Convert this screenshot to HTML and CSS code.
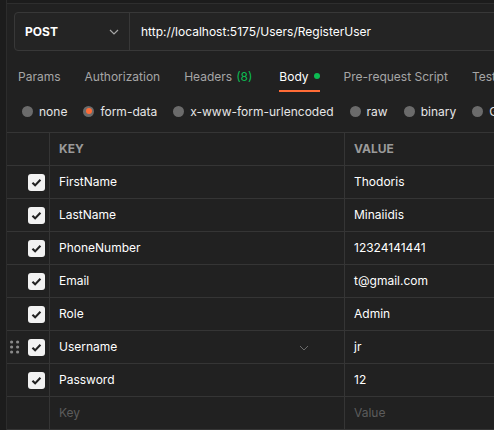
FILE: index.html
```html
<!DOCTYPE html>
<html>
<head>
<meta charset="utf-8">
<link rel="stylesheet" href="styles.css">
</head>
<body>
<div class="app">
  <div class="side"></div>
  <div class="main">
    <div class="topstrip"></div>
    <div class="reqbar">
      <div class="method">
        <span class="method-name">POST</span>
        <svg class="chev" width="10" height="6" viewBox="0 0 10 6"><path d="M1 1l4 4 4-4" fill="none" stroke="#a6a6a6" stroke-width="1.2"/></svg>
      </div>
      <div class="url">http://localhost:5175/Users/RegisterUser</div>
    </div>
    <div class="tabs">
      <span class="tab">Params</span>
      <span class="tab">Authorization</span>
      <span class="tab headers">Headers <span class="count">(8)</span></span>
      <span class="tab active">Body <span class="dot"></span></span>
      <span class="tab">Pre-request Script</span>
      <span class="tab">Tests</span>
    </div>
    <div class="radios">
      <span class="radio"><span class="circle"></span>none</span>
      <span class="radio"><span class="circle on"></span>form-data</span>
      <span class="radio"><span class="circle"></span>x-www-form-urlencoded</span>
      <span class="radio"><span class="circle"></span>raw</span>
      <span class="radio"><span class="circle"></span>binary</span>
      <span class="radio"><span class="circle"></span>GraphQL</span>
    </div>
    <div class="table">
      <div class="row head">
        <div class="c1"></div>
        <div class="c2">KEY</div>
        <div class="c3">VALUE</div>
      </div>
      <div class="row">
        <div class="c1"><span class="cb"><svg viewBox="0 0 16 16"><path d="M4.2 8.3l2.5 2.4 5-5.2" fill="none" stroke="#212121" stroke-width="2"/></svg></span></div>
        <div class="c2">FirstName</div>
        <div class="c3">Thodoris</div>
      </div>
      <div class="row">
        <div class="c1"><span class="cb"><svg viewBox="0 0 16 16"><path d="M4.2 8.3l2.5 2.4 5-5.2" fill="none" stroke="#212121" stroke-width="2"/></svg></span></div>
        <div class="c2">LastName</div>
        <div class="c3">Minaiidis</div>
      </div>
      <div class="row">
        <div class="c1"><span class="cb"><svg viewBox="0 0 16 16"><path d="M4.2 8.3l2.5 2.4 5-5.2" fill="none" stroke="#212121" stroke-width="2"/></svg></span></div>
        <div class="c2">PhoneNumber</div>
        <div class="c3">12324141441</div>
      </div>
      <div class="row">
        <div class="c1"><span class="cb"><svg viewBox="0 0 16 16"><path d="M4.2 8.3l2.5 2.4 5-5.2" fill="none" stroke="#212121" stroke-width="2"/></svg></span></div>
        <div class="c2">Email</div>
        <div class="c3">t@gmail.com</div>
      </div>
      <div class="row">
        <div class="c1"><span class="cb"><svg viewBox="0 0 16 16"><path d="M4.2 8.3l2.5 2.4 5-5.2" fill="none" stroke="#212121" stroke-width="2"/></svg></span></div>
        <div class="c2">Role</div>
        <div class="c3">Admin</div>
      </div>
      <div class="row">
        <div class="c1 drag">
          <svg class="grip" width="10" height="14" viewBox="0 0 10 14"><g fill="#8a8a8a"><circle cx="1.6" cy="2" r="1.6"/><circle cx="7.6" cy="2" r="1.6"/><circle cx="1.6" cy="7" r="1.6"/><circle cx="7.6" cy="7" r="1.6"/><circle cx="1.6" cy="12" r="1.6"/><circle cx="7.6" cy="12" r="1.6"/></g></svg>
          <span class="cb"><svg viewBox="0 0 16 16"><path d="M4.2 8.3l2.5 2.4 5-5.2" fill="none" stroke="#212121" stroke-width="2"/></svg></span>
        </div>
        <div class="c2 withchev">Username
          <svg class="kchev" width="10" height="6" viewBox="0 0 10 6"><path d="M1 1l4 4 4-4" fill="none" stroke="#6b6b6b" stroke-width="1"/></svg>
        </div>
        <div class="c3">jr</div>
      </div>
      <div class="row">
        <div class="c1"><span class="cb"><svg viewBox="0 0 16 16"><path d="M4.2 8.3l2.5 2.4 5-5.2" fill="none" stroke="#212121" stroke-width="2"/></svg></span></div>
        <div class="c2">Password</div>
        <div class="c3">12</div>
      </div>
      <div class="row">
        <div class="c1"></div>
        <div class="c2 ph">Key</div>
        <div class="c3 ph">Value</div>
      </div>
    </div>
  </div>
</div>
</body>
</html>
```
FILE: styles.css
```css
* { box-sizing: border-box; }
html, body { margin: 0; padding: 0; }
body {
  background: #212121;
  font-family: Inter, "Noto Sans", sans-serif;
  font-size: 12px;
  color: #e6e6e6;
  width: 494px;
  height: 430px;
  overflow: hidden;
}
.app { display: flex; height: 430px; }
.side {
  width: 7px;
  flex: none;
  background: #1c1c1c;
  border-right: 1px solid #2c2c2c;
}
.main { flex: 1; min-width: 0; overflow: hidden; }
.topstrip {
  height: 4px;
  background: #1c1c1c;
  border-bottom: 1px solid #2e2e2e;
}
.reqbar {
  display: flex;
  margin: 8px 0 0 7px;
  height: 39px;
  width: 520px;
  border: 1px solid #383838;
  border-radius: 4px;
  background: #242424;
}
.method {
  width: 115px;
  flex: none;
  display: flex;
  align-items: center;
  justify-content: space-between;
  padding: 0 10px 0 10px;
  border-right: 1px solid #383838;
}
.method-name { font-weight: 700; color: #fff; font-size: 12px; }
.url {
  display: flex;
  align-items: center;
  padding-left: 11px;
  color: #fff;
  white-space: nowrap;
}
.tabs {
  display: flex;
  gap: 24px;
  height: 32px;
  margin-top: 9px;
  padding-left: 11px;
  align-items: center;
  white-space: nowrap;
  color: #a6a6a6;
}
.tab { position: relative; display: flex; align-items: center; height: 32px; flex: none; }
.tab.headers { margin-right: 3px; }
.tab .count { color: #0cbb52; margin-left: 4px; }
.tab.active { color: #fff; }
.tab.active::after {
  content: "";
  position: absolute;
  left: 0; right: 0; bottom: 0;
  height: 2px;
  background: #ff6c37;
}
.dot {
  display: inline-block;
  width: 6px; height: 6px;
  border-radius: 50%;
  background: #0cbb52;
  margin-left: 5px;
}
.radios {
  display: flex;
  gap: 16px;
  padding-left: 15px;
  padding-bottom: 2px;
  height: 40px;
  align-items: center;
  white-space: nowrap;
  color: #e6e6e6;
}
.radio { display: flex; align-items: center; flex: none; }
.circle {
  width: 11px; height: 11px;
  border-radius: 50%;
  background: #6b6b6b;
  margin-right: 6px;
  display: flex;
  align-items: center;
  justify-content: center;
}
.circle.on::after {
  content: "";
  width: 6px; height: 6px;
  border-radius: 50%;
  background: #ff6c37;
}
.table { border-top: 1px solid #353535; }
.row {
  display: flex;
  height: 33px;
  border-bottom: 1px solid #353535;
}
.c1 {
  width: 43px;
  flex: none;
  border-right: 1px solid #353535;
  display: flex;
  align-items: center;
  justify-content: flex-end;
  padding-right: 4px;
  position: relative;
}
.c2 {
  width: 295px;
  flex: none;
  border-right: 1px solid #353535;
  display: flex;
  align-items: center;
  padding-left: 9px;
  padding-bottom: 1px;
  color: #fff;
  position: relative;
}
.c3 {
  flex: 1;
  display: flex;
  align-items: center;
  padding-left: 9px;
  padding-bottom: 1px;
  color: #fff;
}
.head .c2, .head .c3 {
  font-weight: 700;
  color: #9a9a9a;
  font-size: 12px;
}
.ph { color: #5c5c5c !important; }
.cb {
  width: 17px; height: 17px;
  border-radius: 3px;
  background: #f2f2f2;
  display: block;
}
.cb svg { width: 17px; height: 17px; display: block; }
.grip { position: absolute; left: 3px; top: 9px; }
.kchev { position: absolute; left: 249px; top: 14px; }
```
